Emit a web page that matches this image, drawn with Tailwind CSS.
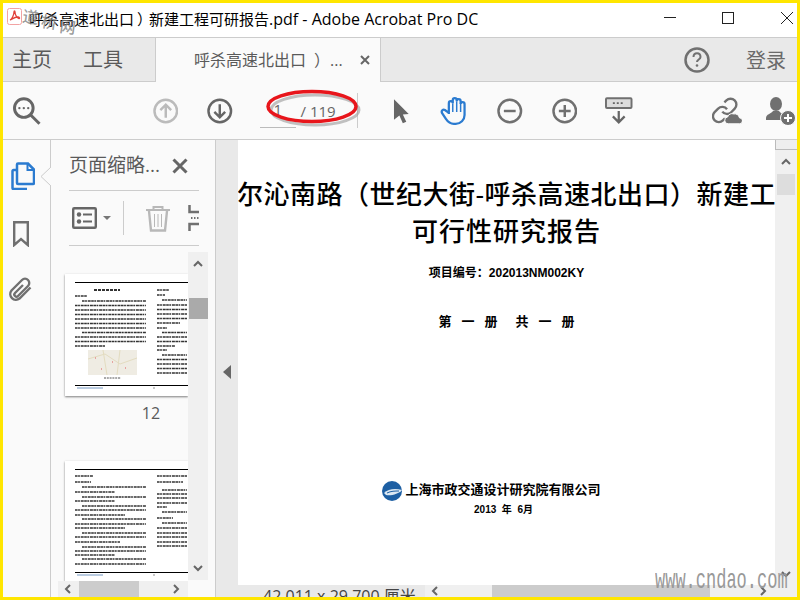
<!DOCTYPE html>
<html lang="zh-CN">
<head>
  <meta charset="UTF-8" />
  <title>Adobe Acrobat Pro DC</title>
  <script src="https://cdn.jsdelivr.net/npm/@tailwindcss/browser@4"></script>
</head>
<body class="bg-white">
  <div class="relative w-[800px] h-[600px] box-border border-[3px] border-[#ffe600] overflow-hidden bg-[#fafafa] font-['Open_Sans','Noto_Sans_CJK_SC',sans-serif] flex flex-col">

    <!-- title bar -->
    <div class="h-[35px] shrink-0 bg-white border-b border-[#cccccc] flex items-center relative">
      <svg class="ml-[4px] mt-[-8px]" width="15" height="17" viewBox="0 0 15 17" fill="none">
        <rect x="0.5" y="0.5" width="14" height="16" rx="2" stroke="#f2a3a3" />
        <path d="M3 12c2-1 4-5 4-8 0-1.500 1-1.500 1 0 0 3 2 6 4 6.500 1 .3 .5-1.500-1-1.500-3 0-6 2-8 3z" stroke="#e0403a" stroke-width="1.300" />
      </svg>
      <div class="ml-[7px] mt-[-3px] text-[15px] text-black whitespace-nowrap">呼杀高速北出口<span class="ml-[3px] mr-[-3px]">）</span>新建工程可研报告<span class="text-[16px]">.pdf - Adobe Acrobat Pro DC</span></div>
      <div class="ml-auto mt-[-4px] flex items-center">
        <svg width="12" height="12" viewBox="0 0 12 12" class="mr-[46px]"><path d="M0 5.500H12" stroke="#222" /></svg>
        <svg width="12" height="12" viewBox="0 0 12 12" class="mr-[47px]"><rect x="0.500" y="0.500" width="11" height="11" fill="none" stroke="#222" /></svg>
        <svg width="12" height="12" viewBox="0 0 12 12" class="mr-[4px]"><path d="M0 0L12 12M12 0L0 12" stroke="#222" /></svg>
      </div>
    </div>

    <!-- tab bar -->
    <div class="h-[44px] shrink-0 bg-[#e9e9e9] border-b border-[#cccccc] flex text-[#5a5a5a]">
      <div class="w-[152px] flex items-center text-[20px]">
        <span class="ml-[9px]">主页</span>
        <span class="ml-[31px]">工具</span>
      </div>
      <div class="w-[226px] h-[44px] bg-[#fafafa] border-x border-[#cccccc] flex items-center text-[16px]">
        <span class="ml-[38px] whitespace-nowrap">呼杀高速北出口<span class="ml-[8px]">）...</span></span>
        <svg class="ml-[17px]" width="10" height="10" viewBox="0 0 10 10"><path d="M1 1L9 9M9 1L1 9" stroke="#666" stroke-width="2" /></svg>
      </div>
      <div class="flex-1 flex items-center">
        <svg class="ml-[303px]" width="26" height="26" viewBox="0 0 26 26" fill="none">
          <circle cx="13" cy="13" r="11.500" stroke="#707070" stroke-width="2.500" />
          <path d="M9.500 10c0-5 7-5 7 0 0 2.500-3.500 2.500-3.500 5" stroke="#707070" stroke-width="2" />
          <circle cx="13" cy="18.500" r="1.300" fill="#707070" />
        </svg>
        <span class="ml-[36px] mt-[2px] text-[20px] text-[#6a6a6a]">登录</span>
      </div>
    </div>

    <!-- toolbar -->
    <div class="h-[58px] shrink-0 bg-[#fafafa] border-b border-[#cccccc] flex items-center">
      <svg class="ml-[10px]" width="28" height="28" viewBox="0 0 28 28" fill="none">
        <circle cx="11" cy="11" r="9.500" stroke="#666" stroke-width="3" />
        <path d="M18 18L27 27" stroke="#666" stroke-width="3" />
        <circle cx="6.500" cy="11" r="1.200" fill="#666" /><circle cx="11" cy="11" r="1.200" fill="#666" /><circle cx="15.500" cy="11" r="1.200" fill="#666" />
      </svg>
      <svg class="ml-[112px]" width="26" height="26" viewBox="0 0 26 26" fill="none">
        <circle cx="13" cy="13" r="11.500" stroke="#bbbbbb" stroke-width="2.500" />
        <path d="M13 20V7M7.500 12L13 6.500L18.500 12" stroke="#bbbbbb" stroke-width="2.500" />
      </svg>
      <svg class="ml-[29px]" width="26" height="26" viewBox="0 0 26 26" fill="none">
        <circle cx="13" cy="13" r="11.500" stroke="#666" stroke-width="2.500" />
        <path d="M13 6V19M7.500 14L13 19.500L18.500 14" stroke="#666" stroke-width="2.500" />
      </svg>
      <div class="ml-[27px] w-[99px] h-[36px] flex text-[15px] text-[#666]">
        <div class="w-[36px] h-[36px] border-b border-[#bbbbbb] pl-[14px] leading-[34px] mt-[-1px]">1</div>
        <div class="ml-[5px] leading-[36px] whitespace-nowrap">/ 119</div>
      </div>
      <div class="w-px h-[35px] bg-[#cccccc]"></div>
      <svg class="ml-[35px]" width="17" height="26" viewBox="0 0 17 26"><path d="M1 1L16 16L10 16.500L13.500 24L10 25.500L6.500 17.500L1 22Z" fill="#666" /></svg>
      <svg class="ml-[31px]" width="29" height="30" viewBox="0 0 29 30" fill="none">
        <path d="M9 18V7a2 2 0 0 1 4 0V4a2 2 0 0 1 4 0V5a2 2 0 0 1 4 0V8a2 2 0 0 1 4 0v11c0 5-4 9-9 9h-2c-4 0-6-2-8-5l-4-6c-1-2 1-4 3-3l4 3" stroke="#2b7bd0" stroke-width="2.300" />
        <path d="M13 7V16M17 5V16M21 7V16" stroke="#2b7bd0" stroke-width="1.500" />
      </svg>
      <svg class="ml-[28px]" width="26" height="26" viewBox="0 0 26 26" fill="none">
        <circle cx="13" cy="13" r="11.500" stroke="#707070" stroke-width="2.500" /><path d="M7 13H19" stroke="#707070" stroke-width="2.500" />
      </svg>
      <svg class="ml-[29px]" width="26" height="26" viewBox="0 0 26 26" fill="none">
        <circle cx="13" cy="13" r="11.500" stroke="#707070" stroke-width="2.500" /><path d="M7 13H19M13 7V19" stroke="#707070" stroke-width="2.500" />
      </svg>
      <svg class="ml-[28px]" width="28" height="27" viewBox="0 0 28 27" fill="none">
        <rect x="1" y="1" width="26" height="10" rx="1" fill="#dddddd" stroke="#707070" stroke-width="2" />
        <path d="M8 6H20" stroke="#666" stroke-width="2" stroke-dasharray="2 2" />
        <path d="M14 14V25M8 19.500L14 25.500L20 19.500" stroke="#666" stroke-width="2.300" />
      </svg>
      <svg class="ml-[79px]" width="31" height="28" viewBox="0 0 31 28" fill="none">
        <g transform="translate(-1.500 -1) scale(1.200)" stroke="#707070" stroke-width="2">
          <path d="M10 13a5 5 0 0 0 7.540.540l3-3a5 5 0 0 0-7.070-7.070l-1.720 1.710" />
          <path d="M14 11a5 5 0 0 0-7.540-.540l-3 3a5 5 0 0 0 7.070 7.070l1.710-1.710" />
        </g>
        <path d="M17 27a3.500 3.500 0 0 1-1-7a4.500 4.500 0 0 1 6-3a5 5 0 0 1 6 4a3 3 0 0 1 0 6z" fill="#707070" stroke="#fafafa" />
      </svg>
      <svg class="ml-[24px] shrink-0" width="31" height="28" viewBox="0 0 31 28" fill="none">
        <ellipse cx="10" cy="7" rx="6" ry="7" fill="#707070" />
        <path d="M0 21c0-4 5-4 7-7h6c1 2 4 3 6 4l-4 5H0z" fill="#707070" />
        <circle cx="22" cy="21" r="7.500" fill="#707070" stroke="#fafafa" />
        <path d="M18 21H26M22 17V25" stroke="#ffffff" stroke-width="2" />
      </svg>
    </div>

    <!-- main -->
    <div class="flex-1 min-h-0 flex">
      <!-- left rail -->
      <div class="relative w-[48px] shrink-0 border-r border-[#cccccc] flex flex-col items-start">
        <svg class="ml-[8px] mt-[22px]" width="24" height="28" viewBox="0 0 24 28" fill="none">
          <path d="M16 27H2.500a1 1 0 0 1-1-1V9a1 1 0 0 1 1-1H6" stroke="#2b7bd0" stroke-width="2.500" />
          <path d="M7 1.500H17L23 7.500V21a1 1 0 0 1-1 1H7a1 1 0 0 1-1-1V2.500a1 1 0 0 1 1-1z" fill="#fafafa" stroke="#2b7bd0" stroke-width="2.500" />
          <path d="M16.500 2V8H23" stroke="#2b7bd0" stroke-width="2" />
        </svg>
        <svg class="ml-[10px] mt-[31px]" width="16" height="26" viewBox="0 0 16 26" fill="none">
          <path d="M1.200 1.200H14.800V24L8 18L1.200 24Z" stroke="#707070" stroke-width="2.400" />
        </svg>
        <svg class="ml-[5px] mt-[30px]" width="25" height="25" viewBox="0 0 25 25" fill="none">
          <path d="M22.500 10.500L11.500 21.500A5.700 5.700 0 0 1 3.500 13.500L14 3A4.200 4.200 0 0 1 20 9L10 19A2.100 2.100 0 0 1 7 16L15 8" stroke="#707070" stroke-width="2.400" />
        </svg>
        <svg class="absolute left-[38px] top-[27px]" width="10" height="19" viewBox="0 0 10 19" fill="none">
          <path d="M10 0V19L0 9.500Z" fill="#fafafa" />
          <path d="M10 0L0 9.500L10 19" stroke="#cccccc" />
        </svg>
      </div>

      <!-- thumbnails panel -->
      <div class="w-[165px] shrink-0 border-r border-[#cccccc] flex flex-col">
        <div class="h-[50px] ml-[18px] w-[130px] flex items-center text-[19px] text-[#5a5a5a] pt-[1px]">
          <span class="whitespace-nowrap">页面缩略...</span>
          <svg class="ml-auto mr-[11px]" width="16" height="16" viewBox="0 0 16 16"><path d="M1.500 1.500L14.500 14.500M14.500 1.500L1.500 14.500" stroke="#666" stroke-width="3" /></svg>
        </div>
        <div class="ml-[18px] w-[130px] h-[56px] border-y border-[#cccccc] flex items-center overflow-hidden">
          <svg class="ml-[3px]" width="25" height="22" viewBox="0 0 25 22" fill="none">
            <rect x="1.200" y="1.200" width="22.600" height="19.600" rx="1" stroke="#666" stroke-width="2.400" />
            <circle cx="7" cy="7.500" r="2.200" fill="#666" /><circle cx="7" cy="14.500" r="2.200" fill="#666" />
            <path d="M11 7.500H20M11 14.500H20" stroke="#666" stroke-width="2" />
          </svg>
          <svg class="ml-[6px]" width="8" height="4" viewBox="0 0 8 4"><path d="M0 0H8L4 4Z" fill="#777" /></svg>
          <div class="ml-[12px] w-px h-[34px] bg-[#cccccc]"></div>
          <svg class="ml-[21px] shrink-0" width="26" height="27" viewBox="0 0 26 27" fill="none">
            <path d="M1 5H25M8.500 5V2H17.500V5" stroke="#b8b8b8" stroke-width="2" />
            <path d="M4 6L6 25.500H20L22 6" stroke="#b8b8b8" stroke-width="2.400" />
            <path d="M9.500 9V22M13 9V22M16.500 9V22" stroke="#b8b8b8" />
          </svg>
          <svg class="ml-[17px] shrink-0" width="11" height="26" viewBox="0 0 11 26" fill="none">
            <path d="M1.500 0V7H11M11 19H1.500V26" stroke="#707070" stroke-width="2.500" />
            <path d="M3 13H11" stroke="#707070" stroke-width="2" stroke-dasharray="1.500 1.500" />
          </svg>
        </div>
        <div class="mt-[6px] ml-[7px] flex">
          <div class="w-[130px]">
            <div class="h-[329px] overflow-hidden pt-[22px] pl-[7px]">
              <svg class="block shadow-[0_1px_2px_rgba(0,0,0,0.5)] bg-white" width="123" height="122" viewBox="0 0 123 122" fill="none">
                <path d="M10 8.500H123M10 111.500H123" stroke="#000" stroke-width="1.200" />
                <path d="M29 16H55" stroke="#333" stroke-width="2" stroke-dasharray="3 1" />
                <path d="M10 22H22M17 27H81M10 31.500H81M10 36H81M10 40.500H81M10 45H81M10 49.500H81M10 54H81M17 58.500H81M10 63H81M10 67.500H81M10 72H40" stroke="#333" stroke-width="1.400" stroke-dasharray="2.600 .5 1.800 .8 3 .5" />
                <path d="M92 16H104M92 21H100M97 26H122M92 31H122M92 35.500H122M92 40H122M92 44.500H122M92 49H115M92 54H102M97 58.500H122M92 63H122M92 67.500H122M92 72H110M92 76H102M97 81H122M92 85.500H122M92 90H122M92 94.500H122M92 99H122" stroke="#333" stroke-width="1.400" stroke-dasharray="2.600 .5 1.800 .8 3 .5" />
                <rect x="23" y="76" width="49" height="25" fill="#efece3" />
                <path d="M23 85L40 80L55 90L72 84M38 76L42 101M55 76L52 101" stroke="#e3dcc0" />
                <path d="M30 84h1M47 88h1M60 94h1M36 95h1" stroke="#e58a8a" stroke-width="1.500" />
                <path d="M39 104H56" stroke="#555" stroke-dasharray="2 .8" />
                <path d="M12 114H38" stroke="#b9cbe0" stroke-width="2" />
                <rect x="88.500" y="113.500" width="1" height="1" fill="#222" />
              </svg>
              <div class="mt-[5px] text-center text-[16px] leading-6 text-[#5a5a5a] w-[123px] pl-[49px]">12</div>
              <svg class="block mt-[36px] shadow-[0_1px_2px_rgba(0,0,0,0.5)] bg-white" width="123" height="125" viewBox="0 0 123 125" fill="none">
                <path d="M10 8.500H123M10 111.500H123" stroke="#000" stroke-width="1.200" />
                <path d="M10 15H28M10 21H26M17 26H81M10 31H50M17 36H81M10 40H50M17 45H81M10 49H81M10 54H60M17 58H81M10 63H81M10 67H60M17 72H81M10 76H81M10 81H55M17 86H81M10 90H81M10 94H50M17 98H81M10 103H81" stroke="#333" stroke-width="1.400" stroke-dasharray="2.600 .5 1.800 .8 3 .5" />
                <path d="M92 15H122M92 21H118M97 29H122M92 33H122M92 37H122M92 42H122M92 46H102M97 51H122M92 57H108M97 62H122M92 67H122M92 72H122M92 76H122M92 81H122M92 85H122" stroke="#333" stroke-width="1.400" stroke-dasharray="2.600 .5 1.800 .8 3 .5" />
                <path d="M12 114H38" stroke="#b9cbe0" stroke-width="2" />
                <rect x="88.500" y="113.500" width="1" height="1" fill="#222" />
              </svg>
            </div>
            <div class="h-[16px] bg-[#f0f0f0] flex items-center">
              <svg class="ml-[6px]" width="7" height="10" viewBox="0 0 7 10" fill="none"><path d="M6 1L2 5L6 9" stroke="#666" stroke-width="2" /></svg>
              <div class="ml-[8px] w-[60px] h-[16px] bg-[#cccccc]"></div>
              <svg class="ml-[34px]" width="7" height="10" viewBox="0 0 7 10" fill="none"><path d="M1 1L5 5L1 9" stroke="#666" stroke-width="2" /></svg>
            </div>
          </div>
          <div class="w-[20px] h-[328px] bg-[#f0f0f0] flex flex-col items-center">
            <svg class="mt-[8px]" width="10" height="7" viewBox="0 0 10 7" fill="none"><path d="M1 6L5 2L9 6" stroke="#666" stroke-width="2" /></svg>
            <div class="mt-[31px] w-[19px] h-[21px] bg-[#aaaaaa]"></div>
            <svg class="mt-auto mb-[8px]" width="10" height="7" viewBox="0 0 10 7" fill="none"><path d="M1 1L5 5L9 1" stroke="#666" stroke-width="2" /></svg>
          </div>
        </div>
      </div>

      <!-- collapse strip -->
      <div class="w-[22px] shrink-0 bg-[#e9e9e9] flex items-center">
        <svg class="ml-[7px] mt-[6px]" width="8" height="14" viewBox="0 0 8 14"><path d="M8 0V14L0 7Z" fill="#666" /></svg>
      </div>

      <!-- document -->
      <div class="w-[537px] shrink-0 flex flex-col">
        <div class="flex-1 min-h-0 bg-white overflow-hidden flex flex-col items-center text-black font-['Liberation_Sans','Noto_Sans_CJK_SC',sans-serif]">
          <div class="mt-[37px] text-[26px] leading-[37px] font-medium whitespace-nowrap tracking-[0.5px]">尔沁南路（世纪大街-呼杀高速北出口）新建工</div>
          <div class="text-[26px] leading-[37px] font-medium whitespace-nowrap tracking-[1px]">可行性研究报告</div>
          <div class="mt-[12px] text-[12px] leading-5 font-bold whitespace-nowrap">项目编号：202013NM002KY</div>
          <div class="mt-[29px] text-[13px] leading-5 font-bold whitespace-nowrap flex gap-[18px]">
            <span class="flex gap-[10px]"><span>第</span><span>一</span><span>册</span></span>
            <span class="flex gap-[10px]"><span>共</span><span>一</span><span>册</span></span>
          </div>
          <div class="mt-[148px] mr-[30px] h-[20px] flex items-center text-[13px] font-bold whitespace-nowrap">
            <svg width="20" height="20" viewBox="0 0 20 20" class="mt-[2px] mr-[3px]">
              <circle cx="10" cy="10" r="10" fill="#1d5fa3" />
              <path d="M2 12c4-4 11-5 18-3c-3 4-11 6-16 5z" fill="#dce8f2" />
              <path d="M5 12c4-2 8-2 12-2" stroke="#1d5fa3" fill="none" />
            </svg>
            <span>上海市政交通设计研究院有限公司</span>
          </div>
          <div class="mt-[3px] mr-[6px] text-[10px] leading-[14px] font-bold whitespace-pre">2013  年  6月</div>
        </div>
        <div class="h-[12px] shrink-0 flex overflow-hidden">
          <div class="w-[187px] bg-[#e9e9e9] pl-[25px] text-[16px] leading-5 pt-px text-[#444] whitespace-nowrap">42.011 x 29.700 厘米</div>
          <div class="flex-1 bg-[#f0f0f0] flex items-center">
            <svg class="ml-[6px]" width="7" height="10" viewBox="0 0 7 10" fill="none"><path d="M6 1L2 5L6 9" stroke="#666" stroke-width="2" /></svg>
            <div class="ml-[54px] w-[218px] h-[12px] bg-[#cccccc]"></div>
            <svg class="ml-[50px]" width="7" height="10" viewBox="0 0 7 10" fill="none"><path d="M1 1L5 5L1 9" stroke="#666" stroke-width="2" /></svg>
          </div>
        </div>
      </div>

      <!-- right scrollbar -->
      <div class="flex-1 flex flex-col items-center bg-[#f0f0f0]">
        <div class="w-full h-[10px] bg-[#eeeeee] border-b border-l border-[#bbbbbb]"></div>
        <svg class="mt-[8px]" width="10" height="7" viewBox="0 0 10 7" fill="none"><path d="M1 6L5 2L9 6" stroke="#666" stroke-width="2" /></svg>
        <div class="mt-[9px] w-[18px] h-[21px] bg-[#dddddd]"></div>
        <svg class="mt-auto mb-[19px]" width="10" height="7" viewBox="0 0 10 7" fill="none"><path d="M1 1L5 5L9 1" stroke="#666" stroke-width="2" /></svg>
      </div>
    </div>

    <!-- red annotation drawn on top of the screenshot -->
    <svg class="absolute left-[260px] top-[82px]" width="110" height="45" viewBox="0 0 110 45" fill="none">
      <ellipse cx="50" cy="23" rx="44" ry="15" stroke="#999" stroke-opacity="0.6" stroke-width="3" transform="translate(2 2)" />
      <ellipse cx="49" cy="21.500" rx="44" ry="15" stroke="#e8151b" stroke-width="3.500" />
    </svg>

    <!-- watermarks -->
    <div class="absolute left-[19px] top-[3px] flex gap-[3px] text-[16px] leading-[20px] font-medium text-[#808080]/80 font-['Noto_Sans_CJK_SC',sans-serif]">
      <span class="rotate-[8deg]">道</span>
      <span class="rotate-[8deg] mt-[5px]">桥</span>
      <span class="rotate-[8deg] mt-[10px]">网</span>
    </div>
    <div class="absolute left-[652px] top-[567px] text-[17px] leading-[24px] text-[#999999] font-['Liberation_Mono',monospace] scale-y-[1.6] whitespace-nowrap">www.cndao.com</div>
  </div>
</body>
</html>
